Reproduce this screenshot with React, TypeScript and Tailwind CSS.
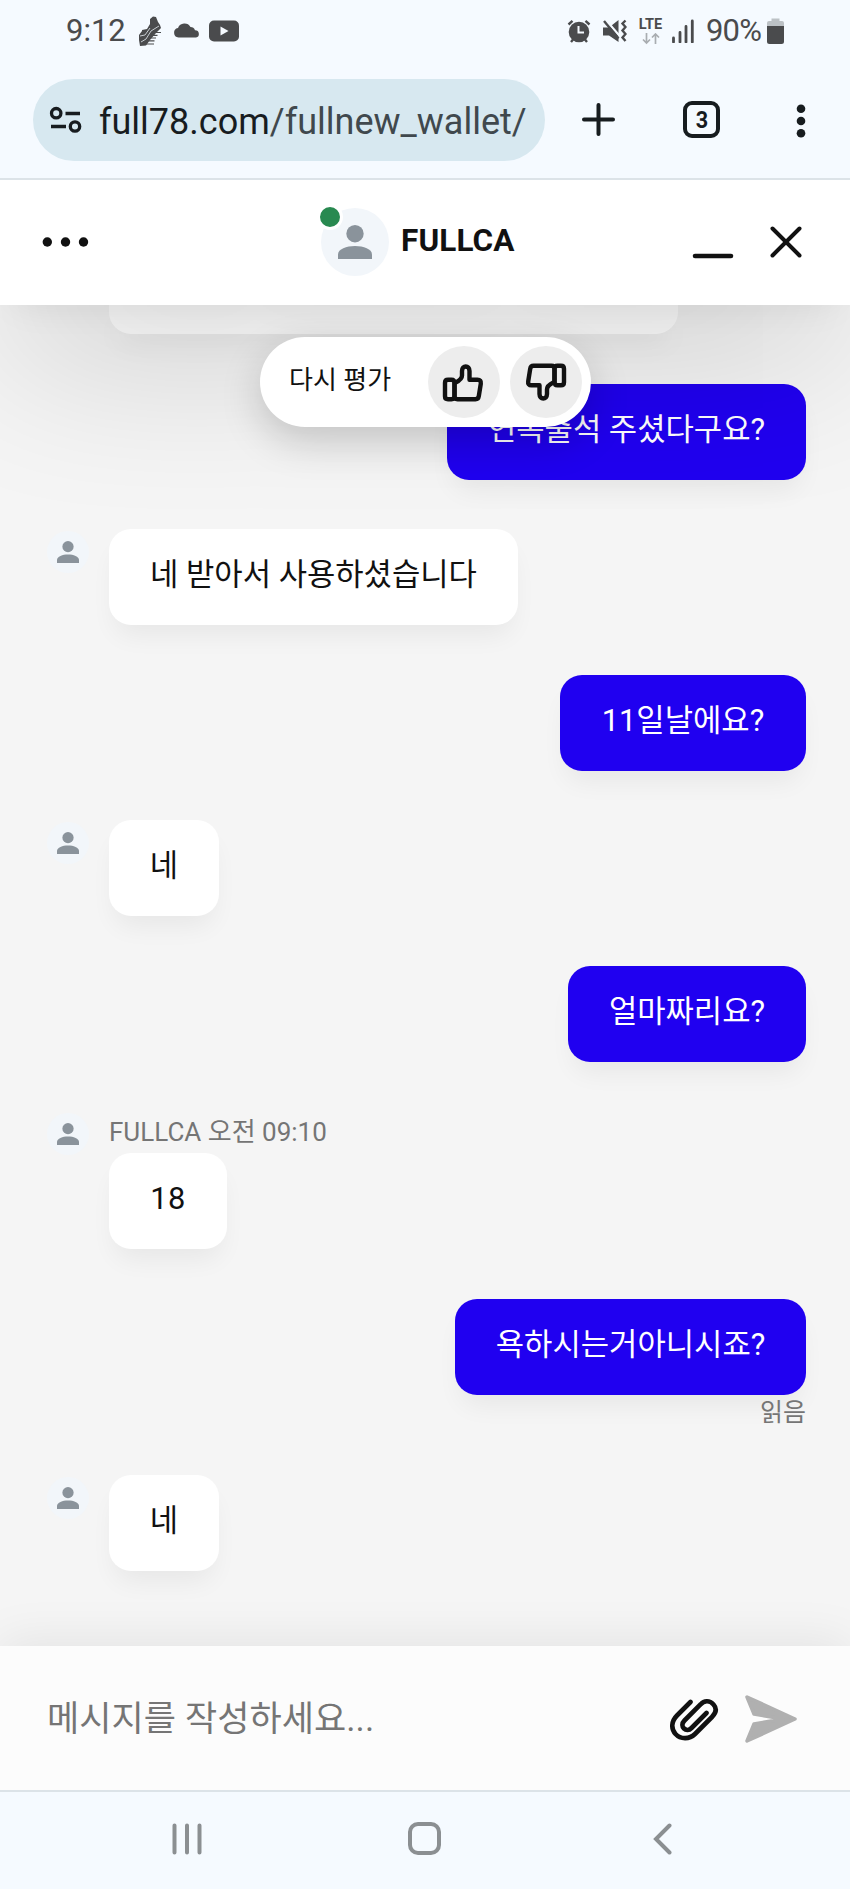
import type { ReactNode } from "react"

interface Message {
    id: number
    from: "agent" | "visitor"
    text: string
    /** Bubble width + letter spacing */
    size: string
    header?: string
    status?: string
}

const messages: Message[] = [
    { id: 1, from: "visitor", text: "연속출석 주셨다구요?", size: "w-[359px]" },
    { id: 2, from: "agent", text: "네 받아서 사용하셨습니다", size: "w-[409px]" },
    { id: 3, from: "visitor", text: "11일날에요?", size: "w-[246px]" },
    { id: 4, from: "agent", text: "네", size: "w-[110px]" },
    { id: 5, from: "visitor", text: "얼마짜리요?", size: "w-[238px]" },
    { id: 6, from: "agent", text: "18", size: "w-[118px] tracking-[0.5px]", header: "FULLCA 오전 09:10" },
    { id: 7, from: "visitor", text: "욕하시는거아니시죠?", size: "w-[351px]", status: "읽음" },
    { id: 8, from: "agent", text: "네", size: "w-[110px]" },
]

function Icon({ w, h, className = "", children }: { w: number; h: number; className?: string; children: ReactNode }) {
    return (
        <svg width={w} height={h} viewBox={`0 0 ${w} ${h}`} fill="none" className={`block shrink-0 ${className}`}>
            {children}
        </svg>
    )
}

function Person({ className }: { className: string }) {
    return (
        <svg viewBox="0 0 34 34" className={className} fill="#8a939b">
            <circle cx="17" cy="8.7" r="8.7" />
            <path d="M0 34v-4.5C0 24 8.500 21 17 21s17 3 17 8.500V34z" />
        </svg>
    )
}

function StatusBar() {
    return (
        <div className="relative z-20 flex h-[61px] items-start bg-[#f5faff] text-[#4a4b4d]">
            <span className="ml-[66px] mt-[13px] w-[60px] text-[31px] leading-[36px]">9:12</span>
            {/* sneaker */}
            <Icon w={24} h={30} className="ml-[12px] mt-[16px]">
                <path d="M12 3l3-2.500 3 .5 2 5 2 3 1 3-5 5-6 7-4 5.500-6 .500L1 24v-5l3-4V14l5-1 3-5z" fill="currentColor" />
                <path d="M3 26l5-3 5-8 8-5M2 20l5-1 5-7" stroke="#c7cdd2" strokeWidth="1" />
                <path d="M16 16.500h7M13.500 19.300h6M12 22h6M10.500 24.800h6M8 28h8" stroke="currentColor" strokeWidth="1.200" />
            </Icon>
            <Icon w={27} h={15} className="ml-[11px] mt-[23px]">
                <path d="M5.500 14.500a4.800 4.800 0 0 1-.5-9.500A7 7 0 0 1 17.500 4a5 5 0 0 1 4.500 3.200A3.700 3.700 0 0 1 23 14.500z" fill="currentColor" />
            </Icon>
            <Icon w={30} h={22} className="ml-[9px] mt-[20px]">
                <rect y=".5" width="30" height="21" rx="5" fill="currentColor" />
                <path d="M11.500 6.500v9l8-4.500z" fill="#f5faff" />
            </Icon>
            {/* alarm */}
            <Icon w={24} h={25} className="ml-auto mt-[19px]">
                <circle cx="12" cy="13" r="10.300" fill="currentColor" />
                <path d="M1.500 5.500l4-3.700M22.500 5.500l-4-3.700M4 23l2.500-3M20 23l-2.500-3" stroke="currentColor" strokeWidth="2.400" />
                <path d="M11.500 7v6.500H17" stroke="#f5faff" strokeWidth="2" />
            </Icon>
            {/* muted, vibrating */}
            <Icon w={25} h={25} className="ml-[11px] mt-[18px]">
                <path d="M1 9.500h6L16.500 2v22L7 17.500H1z" fill="currentColor" />
                <path d="M3.500 1.500l15 17.500" stroke="#f5faff" strokeWidth="2.200" />
                <path d="M2 3l14.500 17.500" stroke="currentColor" strokeWidth="2.400" />
                <path d="M23.500 2.500l-3 3 3 3.500-3 3.500 3 3.500-3 3.500 3 3.500" stroke="currentColor" strokeWidth="2.400" />
            </Icon>
            <div className="ml-[11px] mt-[18px] flex w-[25px] flex-col items-center">
                <span className="text-[14.500px] font-bold leading-[14px]">LTE</span>
                <Icon w={18} h={12} className="mt-px">
                    <path d="M4.500 0v10M1 6.500L4.500 10 8 6.500M13.500 11V1M10 4.500L13.500 1 17 4.500" stroke="#a9adb1" strokeWidth="1.700" />
                </Icon>
            </div>
            <Icon w={22} h={24} className="ml-[9px] mt-[19px]">
                <path d="M1.500 19v4M8 13.500V23M14 7.500V23M20.300 2v21" stroke="currentColor" strokeWidth="2.800" strokeLinecap="round" />
            </Icon>
            <span className="ml-[12px] mt-[13px] w-[58px] whitespace-nowrap text-[31px] leading-[36px] tracking-[-0.8px]">90%</span>
            <Icon w={17} h={26} className="ml-[3px] mr-[66px] mt-[18px]">
                <path d="M4.500 3V0.500h8V3H15a2 2 0 0 1 2 2v4H0V5a2 2 0 0 1 2-2z" fill="#bcc1c5" />
                <path d="M0 8h17v15.500a2.500 2.500 0 0 1-2.500 2.500h-12A2.500 2.500 0 0 1 0 23.500z" fill="currentColor" />
            </Icon>
        </div>
    )
}

function AddressBar() {
    return (
        <div className="relative z-20 flex h-[117px] items-start bg-[#f5faff] pt-[18px] text-[#171c1f]">
            <div className="ml-[33px] flex h-[82px] w-[512px] items-center rounded-full bg-[#d7e8f0] pl-[16px]">
                <Icon w={33} h={28}>
                    <g stroke="currentColor" strokeWidth="3.300">
                        <circle cx="7.200" cy="7.200" r="4.700" />
                        <path d="M16.500 7.500H31M2 20.500h15" />
                        <circle cx="26" cy="20.500" r="4.700" />
                    </g>
                </Icon>
                <span className="ml-[17px] mt-[3px] whitespace-nowrap text-[36px] leading-[44px]">
                    full78.com<span className="text-[#40484d]">/fullnew_wallet/</span>
                </span>
            </div>
            <Icon w={33} h={33} className="ml-[37px] mt-[24px]">
                <path d="M16.500 2v29M2 16.500h29" stroke="currentColor" strokeWidth="4" strokeLinecap="round" />
            </Icon>
            <div className="ml-[68px] mt-[22px] flex h-[37px] w-[37px] items-center justify-center rounded-[9px] border-4 border-[#171c1f] text-[24px] font-bold leading-none">
                <span className="scale-x-90">3</span>
            </div>
            <Icon w={10} h={34} className="ml-[76px] mt-[25px]">
                <g fill="currentColor">
                    <circle cx="5" cy="4.700" r="4.300" />
                    <circle cx="5" cy="17" r="4.300" />
                    <circle cx="5" cy="29.300" r="4.300" />
                </g>
            </Icon>
        </div>
    )
}

function ChatHeader() {
    return (
        <header className="relative z-10 flex h-[127px] items-center border-t-2 border-[#dce3e8] bg-white pb-[2px] shadow-[0_16px_36px_-16px_rgba(0,0,0,0.08),0_50px_170px_-10px_rgba(0,0,0,0.2)]">
            <Icon w={48} h={10} className="ml-[42px]">
                <g fill="#111">
                    <circle cx="5.300" cy="5" r="4.700" />
                    <circle cx="23.500" cy="5" r="4.700" />
                    <circle cx="41.500" cy="5" r="4.700" />
                </g>
            </Icon>
            <div className="relative ml-[231px] flex h-[68px] w-[68px] items-center justify-center rounded-full bg-[#f2f6fa]">
                <Person className="h-[34px] w-[34px]" />
                <span className="absolute -left-[4px] -top-[4px] h-[26px] w-[26px] rounded-full border-[3px] border-white bg-[#288950]" />
            </div>
            <h1 className="mb-[1px] ml-[12px] text-[31.500px] font-bold leading-[36px] tracking-[0.1px] text-[#111]">FULLCA</h1>
            <Icon w={42} h={34} className="ml-auto">
                <path d="M3 31h36" stroke="#111" strokeWidth="4.500" strokeLinecap="round" />
            </Icon>
            <Icon w={34} h={34} className="ml-[35px] mr-[47px]">
                <path d="M3.500 3.500l27 27M30.500 3.500l-27 27" stroke="#111" strokeWidth="4" strokeLinecap="round" />
            </Icon>
        </header>
    )
}

function Thumb({ down = false }: { down?: boolean }) {
    return (
        <span className="flex h-[72px] w-[72px] items-center justify-center rounded-full bg-[#ededed]">
            <Icon w={42} h={39} className={down ? "rotate-180" : "mr-[2px]"}>
                <g stroke="#111" strokeWidth="4.400" strokeLinejoin="round">
                    <path d="M12.500 20c3-1.500 7.500-3 7.500-7.500V8c0-6 7.500-6 7.500 0v8.700h8c2.500 0 3.700 1.500 3.300 4l-2 12.500c-.3 2-1.300 3-3.300 3h-18c-2 0-3-1-3-3z" />
                    <path d="M12.500 20c0-2-1-3.300-3-3.300H6c-2 0-3 1-3 3v13.500c0 2 1 3 3 3h3.500c2 0 3-1 3-3z" />
                </g>
            </Icon>
        </span>
    )
}

function RatePopup() {
    return (
        <div className="absolute left-[260px] top-[32px] z-20 flex h-[90px] w-[331px] items-center rounded-full bg-white pl-[29px] pr-[9px] shadow-[0_14px_40px_rgba(0,0,0,0.18)]">
            <span className="mb-[4px] text-[26px] leading-[32px] text-[#111]">다시 평가</span>
            <div className="ml-auto flex gap-[10px]">
                <Thumb />
                <Thumb down />
            </div>
        </div>
    )
}

function Bubble({ message }: { message: Message }) {
    const color = message.from === "agent" ? "bg-white text-[#111]" : "bg-[#2000f0] text-white"
    return (
        <div className={`flex h-[96px] items-center justify-center whitespace-nowrap rounded-[22px] pb-[4px] text-[30.800px] leading-[40px] shadow-[0_16px_26px_-6px_rgba(0,0,0,0.06)] ${color} ${message.size}`}>
            {message.text}
        </div>
    )
}

function MessageRow({ message }: { message: Message }) {
    if (message.from === "visitor") {
        return (
            <div className="flex flex-col items-end">
                <Bubble message={message} />
                {message.status && <span className="h-[31px] text-[25px] leading-[36px] text-[#757575]">{message.status}</span>}
            </div>
        )
    }
    return (
        <div className="flex items-start">
            <span className="mt-[2px] flex h-[42px] w-[42px] items-center justify-center rounded-full bg-[#f2f6fa]">
                <Person className="h-[22px] w-[22px]" />
            </span>
            <div className="ml-[20px]">
                {message.header && <div className="h-[42px] text-[26px] leading-[43px] text-[#757575]">{message.header}</div>}
                <Bubble message={message} />
            </div>
        </div>
    )
}

function Composer() {
    return (
        <footer className="relative z-10 flex h-[144px] items-center bg-[#fcfcfc] shadow-[0_-4px_50px_rgba(0,0,0,0.08)]">
            <span className="ml-[47px] mt-[3px] text-[35px] leading-[40px] tracking-[0.080px] text-[#757575]">메시지를 작성하세요...</span>
            <Icon w={50} h={44} className="ml-auto mt-[3px]">
                <path
                    d="M20.500 4L7 17.500C1 23.500 1 31 5.500 36c5 5.500 14 5.500 19.500 0l17-17c4-4 5-8.500 1.500-12.500-4-4.500-9.500-4-13 0L14.500 22.500c-3 3-2.500 6-.5 8s5 2 7.500-.5L36.500 15"
                    stroke="#111"
                    strokeWidth="4.600"
                    strokeLinecap="round"
                />
            </Icon>
            <Icon w={54} h={50} className="ml-[24px] mr-[52px] mt-[2px]">
                <path d="M3 3l48 22L3 47l7-17 29-5-29-5z" fill="#b0b0b0" stroke="#b0b0b0" strokeWidth="3.500" strokeLinejoin="round" />
            </Icon>
        </footer>
    )
}

function NavigationBar() {
    return (
        <nav className="relative z-10 flex h-[99px] items-center border-t-2 border-[#dce3e8] bg-[#f5faff] pb-[4px]">
            <Icon w={30} h={32} className="ml-[171.500px]">
                <path d="M2.500 2.500v27M15 2.500v27M27.500 2.500v27" stroke="#8b8f92" strokeWidth="4" strokeLinecap="round" />
            </Icon>
            <span className="ml-[206px] h-[33px] w-[33px] rounded-[10px] border-4 border-[#8b8f92]" />
            <Icon w={20} h={32} className="ml-[211px]">
                <path d="M17.500 2.500L4 16l13.500 13.500" stroke="#8b8f92" strokeWidth="4" strokeLinecap="round" />
            </Icon>
        </nav>
    )
}

export default function App() {
    return (
        <div className="h-[1889px] w-[850px] overflow-hidden bg-[#f5faff] font-['Roboto','Noto_Sans_CJK_KR',sans-serif]">
            <StatusBar />
            <AddressBar />
            <ChatHeader />
            <main className="relative h-[1341px] overflow-hidden bg-[#f5f5f5] pl-[47px] pr-[44px]">
                {/* tail of the previous message */}
                <div className="ml-[62px] h-[29px] w-[569px] rounded-b-[22px] bg-white shadow-[0_16px_26px_-6px_rgba(0,0,0,0.06)]" />
                <div className="mt-[50px] flex flex-col gap-[49.450px]">
                    {messages.map((message) => (
                        <MessageRow key={message.id} message={message} />
                    ))}
                </div>
                <RatePopup />
            </main>
            <Composer />
            <NavigationBar />
        </div>
    )
}
